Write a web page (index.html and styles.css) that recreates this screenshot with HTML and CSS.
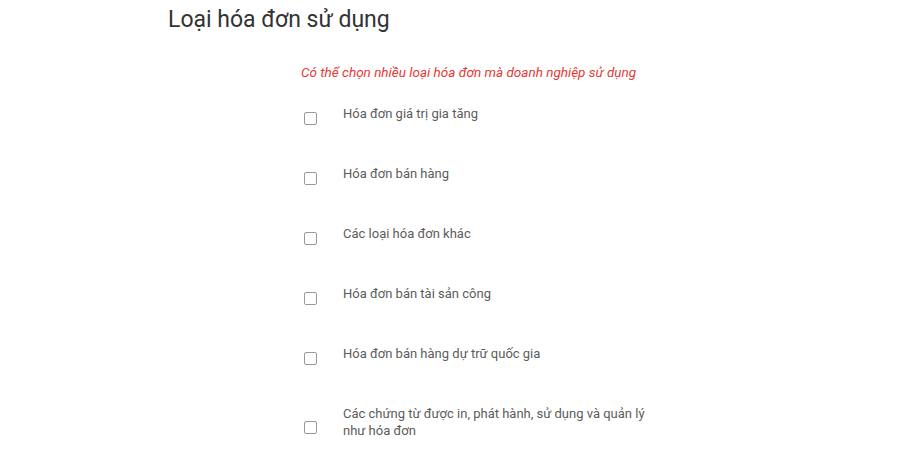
FILE: index.html
```html
<!DOCTYPE html>
<html lang="vi">
<head>
    <meta charset="UTF-8">
    <title>Loại hóa đơn sử dụng</title>
    <link rel="stylesheet" href="styles.css">
</head>
<body>
    <div class="section">
        <h2 class="section-title">Loại hóa đơn sử dụng</h2>
        <div class="section-body">
            <p class="hint">Có thể chọn nhiều loại hóa đơn mà doanh nghiệp sử dụng</p>
            <div class="option-list">
                <label class="option">
                    <span class="check"></span>
                    <span class="option-text">Hóa đơn giá trị gia tăng</span>
                </label>
                <label class="option">
                    <span class="check"></span>
                    <span class="option-text">Hóa đơn bán hàng</span>
                </label>
                <label class="option">
                    <span class="check"></span>
                    <span class="option-text">Các loại hóa đơn khác</span>
                </label>
                <label class="option">
                    <span class="check"></span>
                    <span class="option-text">Hóa đơn bán tài sản công</span>
                </label>
                <label class="option">
                    <span class="check"></span>
                    <span class="option-text">Hóa đơn bán hàng dự trữ quốc gia</span>
                </label>
                <label class="option">
                    <span class="check"></span>
                    <span class="option-text">Các chứng từ được in, phát hành, sử dụng và quản lý như hóa đơn</span>
                </label>
            </div>
        </div>
    </div>
</body>
</html>
```

FILE: styles.css
```css
* {
    margin: 0;
    padding: 0;
    box-sizing: border-box;
}

body {
    font-family: 'Roboto', 'Liberation Sans', sans-serif;
    background: #fff;
    color: #555;
}

.section {
    padding: 5px 0 0 168px;
}

.section-title {
    font-size: 23px;
    font-weight: 400;
    color: #333;
    line-height: 30px;
}

.section-body {
    padding-left: 133px;
}

.hint {
    margin-top: 28px;
    font-size: 13.5px;
    font-style: italic;
    color: #e53935;
    line-height: 18px;
}

.option-list {
    display: flex;
    flex-direction: column;
    gap: 43px;
    margin-top: 24px;
    width: 360px;
}

.option {
    display: flex;
    align-items: center;
    cursor: pointer;
}

.check {
    flex: none;
    width: 13px;
    height: 13px;
    margin: 5px 26px -5px 3px;
    border: 1px solid #999;
    border-radius: 2px;
}

.option-text {
    font-size: 13px;
    line-height: 17px;
    color: #5c5c5c;
    max-width: 320px;
}
```
